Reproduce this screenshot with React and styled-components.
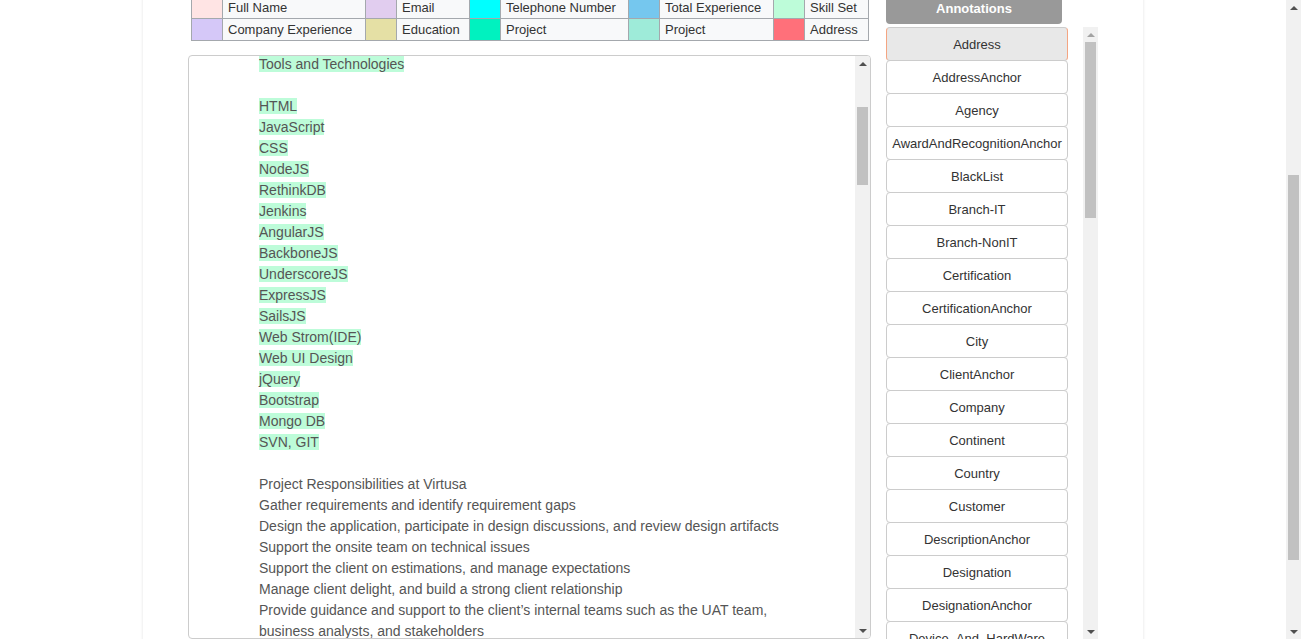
import { useLayoutEffect, useRef } from "react";
import styled, { createGlobalStyle } from "styled-components";

const GlobalStyle = createGlobalStyle`
  body {
    margin: 0;
    background: #fff;
    font-family: "Liberation Sans", Arial, sans-serif;
    color: #333;
  }
`;

const Shell = styled.div`
  padding-right: 15px;
`;

const Page = styled.div`
  width: 1000px;
  margin: 0 auto;
  padding: 257px 45px 106px;
  box-sizing: border-box;
  background: #fff;
  box-shadow: 0 0 3px rgba(0, 0, 0, 0.12);
`;

const Workspace = styled.div`
  display: grid;
  grid-template-columns: 683px 212px;
  column-gap: 15px;
  align-items: start;
`;

const LeftColumn = styled.div`
  display: flex;
  flex-direction: column;
  margin-top: 4px;
`;

const Legend = styled.table`
  width: 678px;
  margin: 0 2px 14px 3px;
  border-collapse: collapse;
  table-layout: fixed;
`;

const Swatch = styled.td`
  height: 21px;
  padding: 0;
  border: 1px solid #a4a8ad;
  background: ${(p) => p.$color};
`;

const LegendLabel = styled.td`
  height: 21px;
  padding: 0 5px;
  border: 1px solid #a4a8ad;
  background: #f8f9fa;
  font-size: 13px;
  color: #333;
  white-space: nowrap;
`;

const Editor = styled.div`
  display: flex;
  height: 584px;
  box-sizing: border-box;
  border: 1px solid #ccc;
  border-radius: 4px;
  overflow: hidden;
`;

const EditorText = styled.div`
  position: relative;
  flex: 1;
  overflow: hidden;
  padding: 10px 70px;
  font-size: 14px;
  line-height: 21px;
  color: #555;
`;

const Line = styled.div`
  min-height: 21px;
`;

const Mark = styled.span`
  background: ${(p) => (p.$hl ? "#bdfcd9" : "transparent")};
`;

const RightColumn = styled.div`
  display: flex;
  flex-direction: column;
`;

const PanelTitle = styled.div`
  width: 176px;
  height: 30px;
  padding-top: 2px;
  line-height: 30px;
  text-align: center;
  background: #999;
  color: #fff;
  font-weight: bold;
  font-size: 13px;
  border-radius: 4px;
  margin-bottom: 3px;
`;

const AnnotationList = styled.div`
  display: flex;
  width: 212px;
  height: 612px;
`;

const AnnotationItems = styled.div`
  flex: 1;
  overflow: hidden;
`;

const AnnotationItem = styled.div`
  width: 182px;
  height: 34px;
  box-sizing: border-box;
  margin-bottom: -1px;
  border: 1px solid #ccc;
  border-left-color: ${(p) => (p.$active ? "#f4a582" : "#ccc")};
  border-right-color: ${(p) => (p.$active ? "#f4a582" : "#ccc")};
  border-radius: 4px;
  background: ${(p) => (p.$active ? "#e8e8e8" : "#fff")};
  display: flex;
  align-items: center;
  justify-content: center;
  font-size: 13px;
  color: #333;
  white-space: nowrap;
  overflow: hidden;
`;

/* classic scrollbar look, drawn by hand since the page hides native ones */
const Rail = styled.div`
  display: flex;
  flex-direction: column;
  flex: 0 0 15px;
  width: 15px;
  background: #f1f1f1;
`;

const PageRail = styled(Rail)`
  position: fixed;
  top: 0;
  right: 0;
  bottom: 0;
`;

const ArrowButton = styled.div`
  flex: 0 0 15px;
  display: flex;
  align-items: center;
  justify-content: center;

  &::after {
    content: "";
    width: 0;
    height: 0;
    border-left: 4px solid transparent;
    border-right: 4px solid transparent;
    ${(p) => (p.$down ? "border-top" : "border-bottom")}: 4px solid
      ${(p) => (p.$disabled ? "#a3a3a3" : "#505050")};
  }
`;

const RailTrack = styled.div`
  flex: 1;
  overflow: hidden;
`;

const Thumb = styled.div`
  margin: 0 2px;
  background: #c1c1c1;
`;

const ScrollBar = ({ offset, size, upDisabled, as }) => (
  <Rail as={as}>
    <ArrowButton $disabled={upDisabled} />
    <RailTrack>
      <Thumb style={{ marginTop: offset, height: size }} />
    </RailTrack>
    <ArrowButton $down />
  </Rail>
);

const legendRows = [
  [
    ["#ffe4e4", "Full Name"],
    ["#e1cdef", "Email"],
    ["#00ffff", "Telephone Number"],
    ["#75c7ee", "Total Experience"],
    ["#bdfcd9", "Skill Set"],
  ],
  [
    ["#d5c8f8", "Company Experience"],
    ["#e5e0a5", "Education"],
    ["#00f2bf", "Project"],
    ["#9eebd9", "Project"],
    ["#ff707a", "Address"],
  ],
];

const labelWidths = [143, 73, 128, 114, 64];

const annotations = [
  "Address", "AddressAnchor", "Agency", "AwardAndRecognitionAnchor", "BlackList",
  "Branch-IT", "Branch-NonIT", "Certification", "CertificationAnchor", "City",
  "ClientAnchor", "Company", "Continent", "Country", "Customer",
  "DescriptionAnchor", "Designation", "DesignationAnchor", "Device_And_HardWare", "Domain",
  "DomainAnchor", "Duration", "Education", "EducationAnchor", "Email",
  "EmploymentType", "Experience", "ExperienceAnchor", "FullName", "Gender",
  "Graduation", "GraduationAnchor", "Hobbies", "Industry", "Institute",
  "Interests", "Languages", "Location", "MaritalStatus", "Nationality",
  "NoticePeriod", "ObjectiveAnchor", "OperatingSystem", "Passport", "PersonalDetailsAnchor",
  "PostGraduation", "Project", "ProjectAnchor", "ProjectRole", "Qualification",
  "Reference", "Responsibility", "ResponsibilityAnchor", "Salary", "SkillSet",
  "SkillSetAnchor", "State", "Summary", "TeamSize", "Telephone",
  "TotalExperience", "University",
];

const t = (text) => ({ text });
const hl = (text) => ({ text, hl: true });

const intro = [
  t("Senior Software Engineer"),
  t(""),
  t("Project: Customer Self Service Portal"),
  t("Client: Virtusa"),
  t("Duration: Jan 2015 – Present"),
  t("Team Size: 8"),
  t(""),
  t("Description"),
  t("Single page web application for managing customer accounts, orders"),
  t("and reports across multiple regions."),
  t(""),
];

const current = [
  t(""),
  hl("HTML"), hl("JavaScript"), hl("CSS"), hl("NodeJS"), hl("RethinkDB"),
  hl("Jenkins"), hl("AngularJS"), hl("BackboneJS"), hl("UnderscoreJS"),
  hl("ExpressJS"), hl("SailsJS"), hl("Web Strom(IDE)"), hl("Web UI Design"),
  hl("jQuery"), hl("Bootstrap"), hl("Mongo DB"), hl("SVN, GIT"),
  t(""),
  t("Project Responsibilities at Virtusa"),
  t("Gather requirements and identify requirement gaps"),
  t("Design the application, participate in design discussions, and review design artifacts"),
  t("Support the onsite team on technical issues"),
  t("Support the client on estimations, and manage expectations"),
  t("Manage client delight, and build a strong client relationship"),
  t("Provide guidance and support to the client’s internal teams such as the UAT team, business analysts, and stakeholders"),
  t("Mentor junior developers and conduct code reviews"),
  t("Coordinate releases and production deployments"),
  t(""),
];

const pastProjects = [
  {
    name: "Retail Analytics Dashboard",
    client: "Cognizant",
    duration: "Jun 2013 – Dec 2014",
    tools: ["HTML", "JavaScript", "CSS", "AngularJS", "D3.js", "Java", "Spring MVC", "MySQL", "Maven", "SVN"],
    work: [
      "Developed reusable chart components for sales reports",
      "Integrated REST services with the front end",
      "Wrote unit tests and improved build scripts",
      "Fixed defects reported during system testing",
      "Participated in sprint planning and daily stand-ups",
    ],
  },
  {
    name: "Online Banking Portal",
    client: "Infosys",
    duration: "Aug 2011 – May 2013",
    tools: ["HTML", "JavaScript", "jQuery", "CSS", "JSP", "Servlets", "Oracle", "Eclipse", "CVS"],
    work: [
      "Built account summary and fund transfer screens",
      "Implemented client side validations",
      "Prepared technical design documents",
      "Supported production issues and hot fixes",
      "Worked closely with the QA team on test cases",
    ],
  },
  {
    name: "Hotel Booking System",
    client: "Tech Mahindra",
    duration: "Jul 2010 – Jul 2011",
    tools: ["HTML", "CSS", "JavaScript", "PHP", "MySQL", "Apache", "Dreamweaver", "SVN"],
    work: [
      "Designed responsive booking pages",
      "Developed search and filter features",
      "Optimised SQL queries for reports",
      "Maintained the project documentation",
    ],
  },
  {
    name: "Inventory Management",
    client: "Wipro",
    duration: "Jun 2009 – Jun 2010",
    tools: ["HTML", "CSS", "JavaScript", "ASP.NET", "C#", "SQL Server", "Visual Studio", "VSS"],
    work: [
      "Created stock entry and purchase order modules",
      "Generated monthly inventory reports",
      "Performed unit testing and bug fixing",
      "Assisted in deployment on client servers",
    ],
  },
];

const pastLines = pastProjects.flatMap((p) => [
  t(`Project: ${p.name}`),
  t(`Client: ${p.client}`),
  t(`Duration: ${p.duration}`),
  t(""),
  hl("Tools and Technologies"),
  t(""),
  ...p.tools.map(hl),
  t(""),
  t(`Project Responsibilities at ${p.client}`),
  ...p.work.map(t),
  t(""),
]);

const closing = [
  t("Education"),
  t("Bachelor of Engineering in Computer Science, Anna University, 2009"),
  t("Higher Secondary, State Board, 2005"),
  t(""),
  t("Certifications"),
  t("Oracle Certified Java Programmer"),
  t("MongoDB Certified Developer"),
  t(""),
  t("Personal Details"),
  t("Date of Birth: 12 March 1987"),
  t("Nationality: Indian"),
  t("Languages Known: English, Tamil, Hindi"),
  t("Marital Status: Married"),
  t("Address: 24, Lake View Road, Chennai, Tamil Nadu"),
  t(""),
  t("Declaration"),
  t("I hereby declare that the information furnished above is true to the best of my knowledge."),
];

export default function App() {
  const textRef = useRef(null);
  const anchorRef = useRef(null);

  useLayoutEffect(() => {
    if (textRef.current && anchorRef.current) {
      textRef.current.scrollTop = anchorRef.current.offsetTop + 2;
    }
    window.scrollTo(0, 265);
  }, []);

  return (
    <>
      <GlobalStyle />
      <Shell>
        <Page>
          <Workspace>
            <LeftColumn>
              <Legend>
                <colgroup>
                  {labelWidths.map((w, i) => [
                    <col key={`s${i}`} style={{ width: 31 }} />,
                    <col key={`l${i}`} style={{ width: w }} />,
                  ])}
                </colgroup>
                <tbody>
                  {legendRows.map((row, r) => (
                    <tr key={r}>
                      {row.map(([color, label], i) => [
                        <Swatch key={`s${i}`} $color={color} />,
                        <LegendLabel key={`l${i}`}>{label}</LegendLabel>,
                      ])}
                    </tr>
                  ))}
                </tbody>
              </Legend>
              <Editor>
                <EditorText ref={textRef}>
                  {intro.map((l, i) => (
                    <Line key={`i${i}`}>
                      <Mark $hl={l.hl}>{l.text}</Mark>
                    </Line>
                  ))}
                  <Line ref={anchorRef}>
                    <Mark $hl>Tools and Technologies</Mark>
                  </Line>
                  {[...current, ...pastLines, ...closing].map((l, i) => (
                    <Line key={`c${i}`}>
                      <Mark $hl={l.hl}>{l.text}</Mark>
                    </Line>
                  ))}
                </EditorText>
                <ScrollBar offset={36} size={78} />
              </Editor>
            </LeftColumn>
            <RightColumn>
              <PanelTitle>Annotations</PanelTitle>
              <AnnotationList>
                <AnnotationItems>
                  {annotations.map((name, i) => (
                    <AnnotationItem key={name} $active={i === 0}>
                      {name}
                    </AnnotationItem>
                  ))}
                </AnnotationItems>
                <ScrollBar offset={0} size={176} upDisabled />
              </AnnotationList>
            </RightColumn>
          </Workspace>
        </Page>
      </Shell>
      <ScrollBar as={PageRail} offset={160} size={385} />
    </>
  );
}
